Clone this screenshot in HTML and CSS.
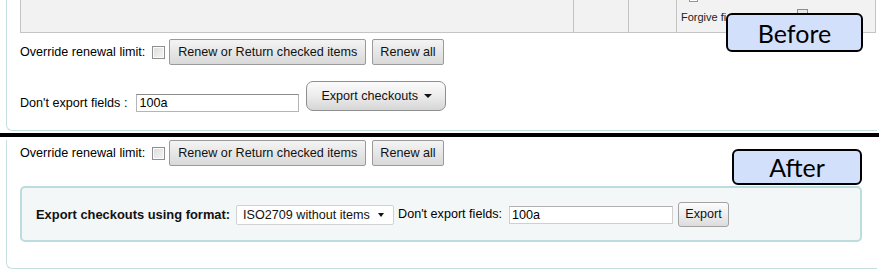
FILE: index.html
```html
<!DOCTYPE html>
<html lang="en">
<head>
    <meta charset="UTF-8">
    <title>Checkouts export: before and after</title>
    <link rel="stylesheet" href="styles.css">
</head>
<body>
    <div class="section">
        <div class="panel panel-before">
            <div class="grid">
                <div class="cell cell-main"></div>
                <div class="cell cell-mid"></div>
                <div class="cell cell-small"></div>
                <div class="cell cell-last">
                    <span class="mini-check mini-top"></span>
                    <div class="forgive">
                        <span class="forgive-text">Forgive fi</span>
                        <span class="mini-check"></span>
                    </div>
                </div>
            </div>
            <div class="actions">
                <span class="label">Override renewal limit:</span>
                <span class="check"></span>
                <button class="btn btn-wide">Renew or Return checked items</button>
                <button class="btn">Renew all</button>
            </div>
            <div class="export-old">
                <span class="label old-label">Don't export fields :</span>
                <input class="field old-field" type="text" value="100a">
                <button class="btn-menu">Export checkouts <span class="caret"></span></button>
            </div>
        </div>
        <div class="badge badge-before">Before</div>
    </div>

    <div class="divider"></div>

    <div class="section">
        <div class="panel panel-after">
            <div class="actions actions-after">
                <span class="label">Override renewal limit:</span>
                <span class="check"></span>
                <button class="btn btn-wide">Renew or Return checked items</button>
                <button class="btn">Renew all</button>
            </div>
            <div class="export-box">
                <span class="format-label">Export checkouts using format:</span>
                <span class="select">ISO2709 without items <span class="caret caret-small"></span></span>
                <span class="label fields-label">Don't export fields:</span>
                <input class="field new-field" type="text" value="100a">
                <button class="btn-export">Export</button>
            </div>
        </div>
        <div class="badge badge-after">After</div>
    </div>
</body>
</html>
```

FILE: styles.css
```css
* {
    box-sizing: border-box;
}
body {
    margin: 0;
    width: 879px;
    overflow: hidden;
    font-family: "Liberation Sans", Arial, sans-serif;
    font-size: 12.6px;
    color: #000;
    background: #fff;
}
.section {
    position: relative;
}
.panel {
    margin: 0 2px 0 6px;
    padding-left: 13px;
    border-left: 1px solid #c5dfdf;
    border-bottom: 1px solid #c5dfdf;
    border-bottom-left-radius: 6px;
}
.panel-before {
    padding-bottom: 18px;
}
.panel-after {
    padding-bottom: 26px;
}
.grid {
    display: flex;
    width: 856px;
    height: 33px;
    background: #f2f2f2;
    border: 1px solid #c4c4c4;
    border-top: none;
}
.cell {
    border-right: 1px solid #c4c4c4;
}
.cell-main {
    width: 553px;
}
.cell-mid {
    width: 55px;
}
.cell-small {
    width: 48px;
}
.cell-last {
    flex: 1;
    border-right: none;
    padding-left: 4px;
    white-space: nowrap;
    overflow: hidden;
}
.mini-check {
    display: inline-block;
    width: 11px;
    height: 11px;
    border: 1px solid #8c8c8c;
    background: #e8e8e8;
}
.mini-top {
    display: block;
    width: 9px;
    height: 10px;
    margin: -8px 0 0 8px;
    border-color: #7f9db9;
    background: #fff;
}
.forgive {
    display: flex;
    align-items: flex-start;
    margin-top: 9px;
    font-size: 11px;
    color: #222;
}
.forgive-text {
    width: 44px;
    white-space: nowrap;
}
.forgive .mini-check {
    margin: -2px 0 0 72px;
}
.actions {
    display: flex;
    align-items: center;
    gap: 4px;
    margin-top: 6px;
    height: 26px;
}
.actions-after {
    margin-top: 3px;
}
.label {
    white-space: nowrap;
}
.check {
    width: 13px;
    height: 13px;
    margin-left: 3px;
    border: 1px solid #8e8f8f;
    background: linear-gradient(135deg, #dcdcdc, #f6f6f6);
    box-shadow: inset 0 0 0 1px #fbfbfb;
}
.btn {
    height: 26px;
    padding: 0 7px;
    font-family: inherit;
    font-size: inherit;
    color: #111;
    background: linear-gradient(#f4f4f4, #e6e6e6 50%, #d9d9d9);
    border: 1px solid #9a9a9a;
    border-radius: 2px;
}
.btn-wide {
    width: 197px;
    padding: 0;
}
.btn + .btn {
    margin-left: 2px;
}
.export-old {
    display: flex;
    align-items: flex-start;
    margin-top: 16px;
    height: 31px;
}
.old-label {
    margin-top: 13px;
    line-height: 18px;
    margin-right: 9px;
}
.field {
    height: 18px;
    padding: 0 2px;
    font-family: inherit;
    font-size: inherit;
    color: #000;
    border: 1px solid #b5b5b5;
    border-top-color: #8a8a8a;
    background: #fff;
    outline: none;
}
.old-field {
    width: 163px;
    margin-top: 13px;
}
.btn-menu {
    display: flex;
    align-items: center;
    gap: 6px;
    height: 30px;
    width: 140px;
    margin-left: 7px;
    padding: 0 0 0 14px;
    font-family: inherit;
    font-size: inherit;
    color: #111;
    background: linear-gradient(#fbfbfb, #ececec 50%, #d6d6d6);
    border: 1px solid #8f8f8f;
    border-radius: 7px;
}
.caret {
    display: inline-block;
    width: 0;
    height: 0;
    border-left: 4px solid transparent;
    border-right: 4px solid transparent;
    border-top: 4px solid #111;
}
.divider {
    height: 4px;
    margin-top: 2px;
    background: #000;
}
.export-box {
    display: flex;
    align-items: center;
    width: 842px;
    height: 56px;
    margin-top: 20px;
    padding: 0 13px 0 14px;
    background: #f3f7f7;
    border: 2px solid #bddcdd;
    border-radius: 5px;
}
.format-label {
    font-weight: bold;
    font-size: 12.9px;
    white-space: nowrap;
    color: #111;
}
.select {
    display: flex;
    align-items: center;
    justify-content: space-between;
    width: 158px;
    height: 20px;
    margin: 1px 0 0 6px;
    padding: 0 9px 0 6px;
    background: #fff;
    border: 1px solid #d2d2d2;
    border-radius: 2px;
    white-space: nowrap;
    color: #111;
}
.caret-small {
    border-left-width: 3px;
    border-right-width: 3px;
    margin-left: 6px;
}
.fields-label {
    margin-left: 4px;
}
.new-field {
    width: 164px;
    margin: 1px 0 0 7px;
    border-color: #cfcfcf;
    border-top-color: #b0b0b0;
}
.btn-export {
    height: 25px;
    width: 51px;
    margin-left: 5px;
    padding: 0;
    font-family: inherit;
    font-size: inherit;
    color: #111;
    background: linear-gradient(#fcfcfc, #eeeeee 50%, #dcdcdc);
    border: 1px solid #a2a2a2;
    border-radius: 3px;
}
.badge {
    position: absolute;
    display: flex;
    align-items: center;
    justify-content: center;
    font-family: Lato, "DejaVu Sans", sans-serif;
    font-size: 25px;
    color: #000;
    background: #d3e0fb;
    border: 2px solid #000;
    border-radius: 6px;
}
.badge-before {
    left: 726px;
    top: 13px;
    width: 137px;
    height: 39px;
}
.badge-after {
    left: 732px;
    top: 9px;
    width: 130px;
    height: 36px;
}
```
